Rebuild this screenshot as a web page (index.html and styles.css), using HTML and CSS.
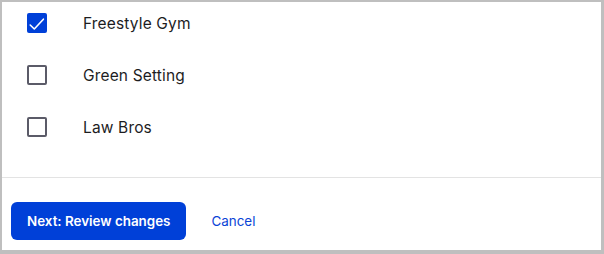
FILE: index.html
```html
<!DOCTYPE html>
<html lang="en">
<head>
<meta charset="utf-8">
<title>Select accounts</title>
<link rel="stylesheet" href="styles.css">
</head>
<body>
<div class="panel">
  <ul class="list">
    <li class="row">
      <span class="box checked">
        <svg viewBox="0 0 20 20" width="20" height="20"><path d="M3.2 12 L7.3 16 L16.4 6.2" fill="none" stroke="#fff" stroke-width="1.6" stroke-linecap="round" stroke-linejoin="round"/></svg>
      </span>
      <span class="label">Freestyle Gym</span>
    </li>
    <li class="row">
      <span class="box"></span>
      <span class="label">Green Setting</span>
    </li>
    <li class="row">
      <span class="box"></span>
      <span class="label">Law Bros</span>
    </li>
  </ul>
  <div class="footer">
    <button class="primary">Next: Review changes</button>
    <button class="link">Cancel</button>
  </div>
</div>
</body>
</html>
```

FILE: styles.css
```css
html, body {
  margin: 0;
  padding: 0;
  background: #fff;
}
.panel {
  box-sizing: border-box;
  width: 604px;
  height: 254px;
  border-style: solid;
  border-color: #bfbfbf;
  border-width: 2px 3px 4px 2px;
  font-family: Inter, "Liberation Sans", sans-serif;
  display: flex;
  flex-direction: column;
}
.list {
  list-style: none;
  margin: 0;
  padding: 1px 0 30px 25px;
  display: flex;
  flex-direction: column;
  gap: 12px;
  border-bottom: 1px solid #e3e3e3;
}
.row {
  height: 40px;
  display: flex;
  align-items: center;
  gap: 36px;
}
.box {
  box-sizing: border-box;
  width: 20px;
  height: 20px;
  border: 2px solid #5b5b68;
  border-radius: 2px;
  flex: none;
  display: flex;
}
.box.checked {
  background: #0040d8;
  border: none;
}
.box svg { display: block; }
.label {
  font-size: 15.5px;
  color: #1d1d1f;
  letter-spacing: 0.15px;
}
.footer {
  display: flex;
  align-items: center;
  gap: 25px;
  padding: 24px 0 10px 9px;
}
.primary {
  height: 38px;
  padding: 0 16px;
  border: none;
  border-radius: 6px;
  background: #0040d8;
  color: #fff;
  font-family: inherit;
  font-size: 13.4px;
  font-weight: 600;
}
.link {
  border: none;
  background: none;
  padding: 0;
  color: #0a44d6;
  font-family: inherit;
  font-size: 13.4px;
  font-weight: 400;
}
```
